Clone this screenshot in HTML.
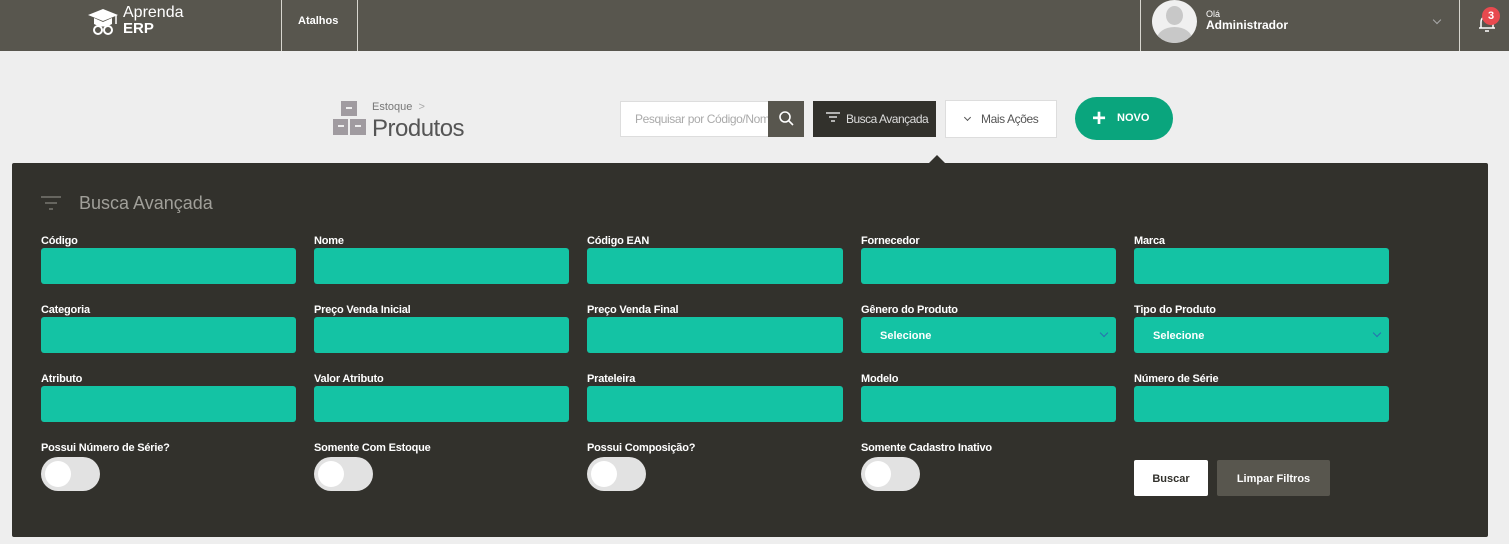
<!DOCTYPE html>
<html><head><meta charset="utf-8"><style>
*{box-sizing:border-box;margin:0;padding:0}
body{width:1509px;height:544px;background:#eeeeee;font-family:"Liberation Sans",sans-serif;position:relative;overflow:hidden}
.a{position:absolute}
.hdr{left:0;top:0;width:1509px;height:51px;background:#58564e}
.vl{width:1px;height:51px;background:#d8d6cf;top:0}
.panel{left:12px;top:163px;width:1476px;height:374px;background:#32312c;border-radius:2px}
.lbl{color:#fff;font-weight:bold;font-size:11px;letter-spacing:-0.2px}
.inp{width:255px;height:36px;background:#14c3a4;border-radius:3px}
.sel{color:#fff;font-weight:bold;font-size:11px;padding:13px 0 0 19px}
.sel:after{content:"";position:absolute;right:9px;top:13px;width:5px;height:5px;border-right:1.5px solid #2a6fb0;border-bottom:1.5px solid #2a6fb0;transform:rotate(45deg)}
.tg{width:59px;height:34px;border-radius:17px;background:#e2e2e2}
.tg:after{content:"";position:absolute;left:4px;top:4px;width:26px;height:26px;border-radius:50%;background:#fff}
</style></head><body>
<div class="a hdr"></div>
<svg class="a" style="left:87px;top:6px" width="32" height="32" viewBox="0 0 32 32"><path d="M1 9 L16 3 L31 9 L16 15Z" fill="#fff"/><path d="M7 12 v6 q9 5 18 0 v-6 l-9 4z" fill="#fff"/><circle cx="11" cy="24" r="4" fill="none" stroke="#fff" stroke-width="2"/><circle cx="21" cy="24" r="4" fill="none" stroke="#fff" stroke-width="2"/><path d="M29 9v9" stroke="#fff" stroke-width="1.5"/></svg>
<div class="a" style="left:123px;top:4px;color:#fff;font-size:16px;line-height:18px">Aprenda</div>
<div class="a" style="left:123px;top:20px;color:#fff;font-size:15px;font-weight:bold;line-height:18px">ERP</div>
<div class="a vl" style="left:281px"></div>
<div class="a vl" style="left:357px"></div>
<div class="a" style="left:298px;top:15px;color:#fff;font-size:11px;font-weight:bold">Atalhos</div>
<div class="a vl" style="left:1140px"></div>
<div class="a vl" style="left:1459px"></div>
<div class="a" style="left:1152px;top:0px;width:45px;height:43px;border-radius:50%;background:#f0f0f0;overflow:hidden"><div class="a" style="left:14px;top:6px;width:17px;height:19px;border-radius:50%;background:#c8c8c8"></div><div class="a" style="left:5px;top:27px;width:35px;height:24px;border-radius:50%;background:#c8c8c8"></div></div>
<div class="a" style="left:1206px;top:9px;color:#fff;font-size:9px">Olá</div>
<div class="a" style="left:1206px;top:18px;color:#fff;font-size:12px;font-weight:bold">Administrador</div>
<div class="a" style="left:1434px;top:17px;width:6px;height:6px;border-right:1px solid #aaa;border-bottom:1px solid #aaa;transform:rotate(45deg)"></div>
<svg class="a" style="left:1477px;top:13px" width="20" height="20"><path d="M4 15 V9 a6 6 0 0 1 12 0 V15 Z M2 15h16 M8 18h4" stroke="#fff" stroke-width="1.5" fill="none"/></svg>
<div class="a" style="left:1482px;top:7px;width:18px;height:18px;border-radius:50%;background:#e84a4f;color:#fff;font-size:11px;font-weight:bold;text-align:center;line-height:18px">3</div>

<svg class="a" style="left:333px;top:101px" width="33" height="34"><rect x="8" y="0" width="16" height="15" fill="#a09ba0"/><rect x="0" y="18" width="15" height="16" fill="#a09ba0"/><rect x="17" y="18" width="16" height="16" fill="#a09ba0"/><rect x="13" y="6" width="6" height="2" fill="#eee"/><rect x="5" y="24" width="6" height="2" fill="#eee"/><rect x="22" y="24" width="6" height="2" fill="#eee"/></svg>
<div class="a" style="left:372px;top:101px;color:#777;font-size:11px">Estoque &nbsp;<span style="color:#aaa">&gt;</span></div>
<div class="a" style="left:372px;top:115px;color:#555;font-size:24px;font-weight:300;letter-spacing:-0.5px">Produtos</div>
<div class="a" style="left:620px;top:101px;width:149px;height:36px;background:#fff;border:1px solid #ddd;color:#aaa;font-size:12px;padding:10px 0 0 14px;white-space:nowrap;overflow:hidden;letter-spacing:-0.4px">Pesquisar por Código/Nome</div>
<div class="a" style="left:768px;top:101px;width:36px;height:36px;background:#58564e"><svg width="36" height="36"><circle cx="17" cy="16" r="5" stroke="#fff" stroke-width="1.6" fill="none"/><path d="M21 20l4 4" stroke="#fff" stroke-width="1.6"/></svg></div>
<div class="a" style="left:813px;top:101px;width:123px;height:36px;background:#32312c;color:#ddd;font-size:12px;padding:11px 0 0 33px;letter-spacing:-0.5px">Busca Avançada</div>
<svg class="a" style="left:826px;top:112px" width="14" height="12"><path d="M0 1h14M3 5h8M5 9h4" stroke="#ddd" stroke-width="1.5"/></svg>
<div class="a" style="left:928px;top:155px;width:0;height:0;border-left:9px solid transparent;border-right:9px solid transparent;border-bottom:9px solid #32312c"></div>
<div class="a" style="left:945px;top:100px;width:112px;height:38px;background:#fff;border:1px solid #ddd;color:#555;font-size:12px;padding:11px 0 0 35px;letter-spacing:-0.4px">Mais Ações</div>
<div class="a" style="left:965px;top:115px;width:5px;height:5px;border-right:1px solid #555;border-bottom:1px solid #555;transform:rotate(45deg)"></div>
<div class="a" style="left:1075px;top:97px;width:98px;height:43px;background:#0aa57d;border-radius:22px;color:#fff;font-weight:bold;font-size:11px;padding:15px 0 0 42px">NOVO</div>
<div class="a" style="left:1092px;top:110px;color:#fff;font-size:24px;line-height:18px;font-weight:bold">+</div>

<div class="a panel"></div>
<svg class="a" style="left:41px;top:196px" width="20" height="15"><path d="M0 1h20M4 7h12M8 13h4" stroke="#66655f" stroke-width="2"/></svg>
<div class="a" style="left:79px;top:193px;color:#a09f99;font-size:18px">Busca Avançada</div>

<div class="a lbl" style="left:41px;top:235px">Código</div><div class="a inp" style="left:41px;top:248px"></div>
<div class="a lbl" style="left:314px;top:235px">Nome</div><div class="a inp" style="left:314px;top:248px"></div>
<div class="a lbl" style="left:587px;top:235px">Código EAN</div><div class="a inp" style="left:587px;top:248px;width:256px"></div>
<div class="a lbl" style="left:861px;top:235px">Fornecedor</div><div class="a inp" style="left:861px;top:248px"></div>
<div class="a lbl" style="left:1134px;top:235px">Marca</div><div class="a inp" style="left:1134px;top:248px"></div>

<div class="a lbl" style="left:41px;top:304px">Categoria</div><div class="a inp" style="left:41px;top:317px"></div>
<div class="a lbl" style="left:314px;top:304px">Preço Venda Inicial</div><div class="a inp" style="left:314px;top:317px"></div>
<div class="a lbl" style="left:587px;top:304px">Preço Venda Final</div><div class="a inp" style="left:587px;top:317px;width:256px"></div>
<div class="a lbl" style="left:861px;top:304px">Gênero do Produto</div><div class="a inp sel" style="left:861px;top:317px">Selecione</div>
<div class="a lbl" style="left:1134px;top:304px">Tipo do Produto</div><div class="a inp sel" style="left:1134px;top:317px">Selecione</div>

<div class="a lbl" style="left:41px;top:373px">Atributo</div><div class="a inp" style="left:41px;top:386px"></div>
<div class="a lbl" style="left:314px;top:373px">Valor Atributo</div><div class="a inp" style="left:314px;top:386px"></div>
<div class="a lbl" style="left:587px;top:373px">Prateleira</div><div class="a inp" style="left:587px;top:386px;width:256px"></div>
<div class="a lbl" style="left:861px;top:373px">Modelo</div><div class="a inp" style="left:861px;top:386px"></div>
<div class="a lbl" style="left:1134px;top:373px">Número de Série</div><div class="a inp" style="left:1134px;top:386px"></div>

<div class="a lbl" style="left:41px;top:442px">Possui Número de Série?</div><div class="a tg" style="left:41px;top:457px"></div>
<div class="a lbl" style="left:314px;top:442px">Somente Com Estoque</div><div class="a tg" style="left:314px;top:457px"></div>
<div class="a lbl" style="left:587px;top:442px">Possui Composição?</div><div class="a tg" style="left:587px;top:457px"></div>
<div class="a lbl" style="left:861px;top:442px">Somente Cadastro Inativo</div><div class="a tg" style="left:861px;top:457px"></div>

<div class="a" style="left:1134px;top:460px;width:74px;height:36px;background:#fff;border-radius:2px;color:#32312c;font-weight:bold;font-size:11px;text-align:center;line-height:38px">Buscar</div>
<div class="a" style="left:1217px;top:460px;width:113px;height:36px;background:#58564e;border-radius:2px;color:#fff;font-weight:bold;font-size:11px;text-align:center;line-height:38px">Limpar Filtros</div>
</body></html>
